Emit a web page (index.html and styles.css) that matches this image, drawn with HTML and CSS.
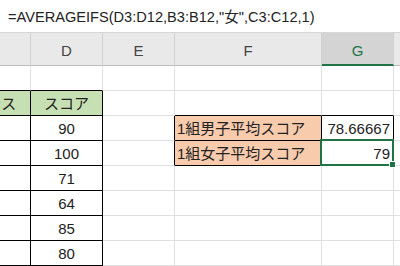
FILE: index.html
```html
<!DOCTYPE html>
<html lang="ja">

<head>
  <meta charset="UTF-8">
  <title>AVERAGEIFS</title>
  <link rel="stylesheet" href="styles.css">
</head>

<body>
  <div class="formula-bar">=AVERAGEIFS(D3:D12,B3:B12,"女",C3:C12,1)</div>

  <div class="sheet">
    <!-- 列見出し（C と H は画面外にはみ出す） -->
    <div class="col-head"></div>
    <div class="col-head">D</div>
    <div class="col-head">E</div>
    <div class="col-head">F</div>
    <div class="col-head active">G</div>
    <div class="col-head"></div>

    <!-- 2行目 -->
    <div class="cell bb"></div>
    <div class="cell bb"></div>
    <div class="cell"></div>
    <div class="cell"></div>
    <div class="cell"></div>
    <div class="cell"></div>

    <!-- 3行目 -->
    <div class="cell head br bb">クラス</div>
    <div class="cell head br bb">スコア</div>
    <div class="cell"></div>
    <div class="cell bb"></div>
    <div class="cell bb"></div>
    <div class="cell"></div>

    <!-- 4行目 -->
    <div class="cell br bb"></div>
    <div class="cell num br bb">90</div>
    <div class="cell br"></div>
    <div class="cell label br bb">1組男子平均スコア</div>
    <div class="cell value br bb">78.66667</div>
    <div class="cell"></div>

    <!-- 5行目 -->
    <div class="cell br bb"></div>
    <div class="cell num br bb">100</div>
    <div class="cell br"></div>
    <div class="cell label br bb">1組女子平均スコア</div>
    <div class="cell value br bb selected">79</div>
    <div class="cell"></div>

    <!-- 6〜9行目 -->
    <div class="cell br bb"></div>
    <div class="cell num br bb">71</div>
    <div class="cell"></div>
    <div class="cell"></div>
    <div class="cell"></div>
    <div class="cell"></div>

    <div class="cell br bb"></div>
    <div class="cell num br bb">64</div>
    <div class="cell"></div>
    <div class="cell"></div>
    <div class="cell"></div>
    <div class="cell"></div>

    <div class="cell br bb"></div>
    <div class="cell num br bb">85</div>
    <div class="cell"></div>
    <div class="cell"></div>
    <div class="cell"></div>
    <div class="cell"></div>

    <div class="cell br bb"></div>
    <div class="cell num br bb">80</div>
    <div class="cell"></div>
    <div class="cell"></div>
    <div class="cell"></div>
    <div class="cell"></div>
  </div>
</body>

</html>
```

FILE: styles.css
```css
body {
  margin: 0;
  width: 400px;
  height: 266px;
  overflow: hidden;
  background: #fff;
  font-family: "Liberation Sans", "Noto Sans CJK JP", sans-serif;
  color: #222;
}

.formula-bar {
  height: 32px;
  border-bottom: 1px solid #d6d6d6;
  padding-left: 8px;
  font-size: 14.6px;
  line-height: 35px;
  color: #222;
  white-space: nowrap;
}

.sheet {
  display: grid;
  grid-template-columns: 73px 72px 72px 147px 72px 72px;
  grid-template-rows: 33px repeat(9, 25px);
  margin-left: -42px;
  width: 442px;
}

.col-head {
  background: #e9e9e9;
  border-right: 1px solid #d0d0d0;
  border-bottom: 1px solid #bdbdbd;
  color: #444;
  font-size: 15px;
  text-align: center;
  line-height: 36px;
}

.col-head.active {
  background: #d4d4d4;
  color: #217346;
  border-bottom: 2px solid #217346;
}

.cell {
  position: relative;
  border-right: 1px solid #e0e0e0;
  border-bottom: 1px solid #e0e0e0;
  font-size: 15px;
  line-height: 26px;
  white-space: nowrap;
}

.cell.br {
  border-right-color: #000;
}

.cell.bb {
  border-bottom-color: #000;
}

.head {
  background: #c6e0b4;
  text-align: center;
}

.num {
  text-align: center;
}

.label {
  background: #f8cbad;
  padding-left: 2px;
}

.value {
  text-align: right;
  padding-right: 3px;
}

.selected::after {
  content: "";
  position: absolute;
  left: -2px;
  top: -2px;
  right: -1px;
  bottom: -1px;
  border: 2px solid #217346;
}

.selected::before {
  content: "";
  position: absolute;
  right: -3px;
  bottom: -3px;
  width: 5px;
  height: 5px;
  background: #217346;
  border: 1px solid #fff;
  z-index: 1;
}
```
